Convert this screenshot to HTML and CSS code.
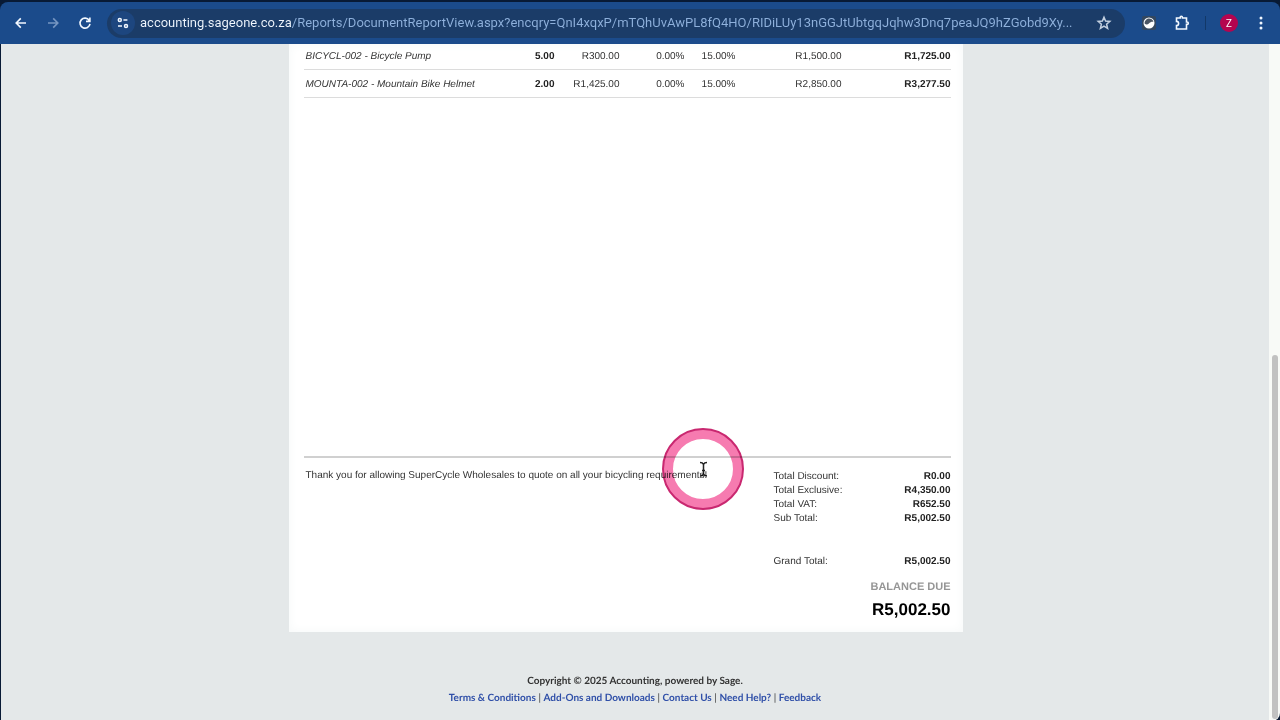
FILE: index.html
```html
<!DOCTYPE html>
<html lang="en">
<head>
<meta charset="utf-8">
<meta name="viewport" content="width=device-width, initial-scale=1">
<title>Document Report View</title>
<link rel="stylesheet" href="styles.css">
</head>
<body>
<header class="toolbar">
  <button class="icon-btn" type="button" aria-label="Back"><svg width="16" height="16" viewBox="0 0 16 16"><path d="M13 8H3.500M7.800 3.400 3.200 8l4.600 4.600"/></svg></button>
  <button class="icon-btn dim" type="button" aria-label="Forward"><svg width="16" height="16" viewBox="0 0 16 16"><path d="M3 8h9.500M8.200 3.400 12.800 8l-4.600 4.600"/></svg></button>
  <button class="icon-btn" type="button" aria-label="Reload"><svg width="16" height="16" viewBox="0 0 16 16"><path d="M12.200 5.300A5 5 0 1 0 13 8.800M12.900 2.500v3.900H9"/></svg></button>
  <div class="address">
    <button class="site-btn" type="button" aria-label="View site information"><svg width="14" height="14" viewBox="0 0 14 14"><circle cx="3.800" cy="4" r="1.500"/><path d="M7.400 4h4M2 10h4"/><circle cx="10" cy="10" r="1.500"/></svg></button>
    <input class="url" type="text" aria-label="Address" spellcheck="false" value="accounting.sageone.co.za/Reports/DocumentReportView.aspx?encqry=QnI4xqxP/mTQhUvAwPL8fQ4HO/RIDiLUy13nGGJtUbtgqJqhw3Dnq7peaJQ9hZGobd9Xy...">
    <button class="icon-btn star" type="button" aria-label="Bookmark this page"><svg width="16" height="16" viewBox="0 0 16 16"><path d="m8 2.200 1.600 3.900 4.200.3-3.200 2.800 1 4.100L8 11.100l-3.600 2.200 1-4.100-3.200-2.800 4.200-.3z"/></svg></button>
  </div>
  <div class="extensions">
    <button class="icon-btn" type="button" aria-label="Extension"><svg width="16" height="16" viewBox="0 0 16 16"><rect class="ext-bg" x="1" y="1" width="14" height="14" rx="2"/><circle class="ext-disc" cx="8" cy="8" r="5.500"/><path class="ext-wave" d="M3.600 8.600c1.300 1.300 3.200 1 4.300-.1 1.200-1.200 2.700-1.900 4.600-1.600-.7-2.400-2.500-3.400-4.500-3.400S3.400 5.600 3.600 8.600z"/></svg></button>
    <button class="icon-btn" type="button" aria-label="Extensions"><svg width="18" height="18" viewBox="0 0 18 18"><path d="M3.500 4h3.700V3.300a1 1 0 0 1 2.200 0V4H13.500v4h.6a1.200 1.200 0 0 1 0 2.400h-.6v4.600H3.500v-3.400a2.100 2.100 0 0 0 0-4.200z"/></svg></button>
  </div>
  <span class="divider"></span>
  <button class="avatar" type="button" aria-label="Profile">Z</button>
  <button class="icon-btn menu" type="button" aria-label="Menu"><svg width="16" height="16" viewBox="0 0 16 16"><circle cx="8" cy="3" r="1.500"/><circle cx="8" cy="8" r="1.500"/><circle cx="8" cy="13" r="1.500"/></svg></button>
</header>
<div class="viewport">
  <main class="page">
    <div class="stage">
      <article class="sheet">
        <section class="items">
          <table class="lines">
            <colgroup><col><col class="c-qty"><col class="c-price"><col class="c-disc"><col class="c-vat"><col class="c-excl"><col class="c-total"></colgroup>
            <tbody>
              <tr><td class="desc">BICYCL-002 - Bicycle Pump</td><td class="strong">5.00</td><td>R300.00</td><td>0.00%</td><td>15.00%</td><td>R1,500.00</td><td class="strong">R1,725.00</td></tr>
              <tr><td class="desc">MOUNTA-002 - Mountain Bike Helmet</td><td class="strong">2.00</td><td>R1,425.00</td><td>0.00%</td><td>15.00%</td><td>R2,850.00</td><td class="strong">R3,277.50</td></tr>
            </tbody>
          </table>
        </section>
        <section class="summary">
          <p class="note">Thank you for allowing SuperCycle Wholesales to quote on all your bicycling requirements!</p>
          <div class="totals">
            <dl>
              <div><dt>Total Discount:</dt><dd>R0.00</dd></div>
              <div><dt>Total Exclusive:</dt><dd>R4,350.00</dd></div>
              <div><dt>Total VAT:</dt><dd>R652.50</dd></div>
              <div><dt>Sub Total:</dt><dd>R5,002.50</dd></div>
              <div class="grand"><dt>Grand Total:</dt><dd>R5,002.50</dd></div>
            </dl>
            <p class="due-label">BALANCE DUE</p>
            <p class="due">R5,002.50</p>
          </div>
        </section>
        <svg class="pointer" width="82" height="82" viewBox="0 0 82 82" aria-hidden="true"><circle class="halo" cx="41" cy="41" r="35"/><circle class="rim" cx="41" cy="41" r="40"/><path class="beam" d="M38 34.500c2 0 3 .8 3.500 1.800.5-1 1.500-1.800 3.500-1.800M41.500 36v10.500M38 48c2 0 3-.8 3.500-1.800.5 1 1.500 1.800 3.500 1.800M40 42.500h3"/></svg>
      </article>
    </div>
    <footer class="footer">
      <p>Copyright © 2025 Accounting, powered by Sage.</p>
      <nav><a href="#">Terms &amp; Conditions</a> | <a href="#">Add-Ons and Downloads</a> | <a href="#">Contact Us</a> | <a href="#">Need Help?</a> | <a href="#">Feedback</a></nav>
    </footer>
  </main>
  <div class="scroll-track"><div class="scroll-thumb"></div></div>
</div>
</body>
</html>
```
FILE: styles.css
```css
* { box-sizing: border-box; }
body {
  margin: 0;
  min-height: 100vh;
  display: flex;
  flex-direction: column;
  background: #081a35;
  font-family: "Liberation Sans", Arial, sans-serif;
  font-size: 10px;
  line-height: 14px;
  color: #333;
  text-rendering: geometricPrecision;
}
p, dl, dd { margin: 0; }
button { border: 0; padding: 0; background: none; color: inherit; cursor: pointer; }

.toolbar {
  height: 42px;
  margin-top: 2px;
  padding: 0 7px 0 8px;
  display: flex;
  align-items: center;
  gap: 7px;
  background: #1b4b8b;
  border-radius: 8px 8px 0 0;
  color: #f2f8ff;
}
.icon-btn, .site-btn, .avatar { display: flex; flex: none; align-items: center; justify-content: center; }
.icon-btn { width: 25px; height: 24px; }
.icon-btn svg, .site-btn svg { fill: none; stroke: currentColor; stroke-width: 1.6; }
.dim { color: #7696c2; }
.address {
  flex: 1;
  min-width: 0;
  height: 29px;
  padding: 0 9px 0 4px;
  display: flex;
  align-items: center;
  gap: 5px;
  background: #1b3c68;
  border-radius: 15px;
  margin-left: 3px;
}
.site-btn { width: 24px; height: 24px; border-radius: 50%; background: #1d467f; }
.address .site-btn svg { stroke-width: 1.5; }
.url {
  flex: 1;
  min-width: 0;
  border: 0;
  padding: 0;
  outline: 0;
  font-family: Roboto, sans-serif;
  font-size: 13px;
  line-height: 20px;
  color: #8fb1dc;
  text-overflow: ellipsis;
  background: linear-gradient(90deg, #f2f8ff 152px, #8fb1dc 152px);
  -webkit-background-clip: text;
  background-clip: text;
  -webkit-text-fill-color: transparent;
}
.star { color: #c3d0e0; }
.address .star svg { stroke-width: 1.5; }
.extensions { display: flex; gap: 8px; margin-left: 4px; }
.ext-bg { fill: #33475f; stroke: none; }
.ext-disc { fill: #fff; stroke: none; }
.ext-wave { fill: #4a5563; stroke: none; }
.divider { width: 1px; height: 14px; margin: 0 7px 0 4px; background: #123868; }
.avatar { width: 18px; height: 18px; border-radius: 50%; background: #b4054f; font-family: Inter, sans-serif; font-size: 10px; color: #fff; }
.menu { margin-left: 3px; }
.menu svg { fill: currentColor; stroke: none; }

.viewport { flex: 1; display: flex; padding-left: 1px; }
.page { flex: 1; min-width: 0; background: #e4e8e9; padding-bottom: 14px; }
.stage { padding-right: 19px; }
.sheet {
  position: relative;
  width: 674px;
  max-width: 100%;
  margin: 0 auto 41px;
  padding: 0 12px 12px 15px;
  background: #fff;
  box-shadow: inset 0 0 9px 2px #f8fafa;
}
.items { min-height: 412px; }
.lines { width: 100%; table-layout: fixed; border-collapse: collapse; }
.lines td { height: 28px; padding: 4px 0 0; border-bottom: 1px solid #dcdcdc; text-align: right; white-space: nowrap; vertical-align: middle; }
.lines tr:first-child td { height: 25px; padding-top: 2px; }
.lines .desc { padding-left: 2px; text-align: left; font-style: italic; }
.lines .strong { font-weight: 700; color: #222; }
.c-qty { width: 55px; }
.c-price { width: 65px; }
.c-disc { width: 65px; }
.c-vat { width: 51px; }
.c-excl { width: 106px; }
.c-total { width: 109px; }
.summary { display: flex; justify-content: space-between; border-top: 2px solid #d0d0d0; padding: 11px 0 0 2px; }
.totals { width: 177px; padding-top: 1px; }
.totals dl div { display: flex; justify-content: space-between; }
.totals dd { font-weight: 700; color: #222; }
.totals .grand { margin-top: 29px; }
.due-label { margin-top: 11px; text-align: right; font-size: 11px; font-weight: 700; color: #969696; }
.due { margin-top: 6px; text-align: right; font-size: 17px; line-height: 20px; font-weight: 700; color: #000; }
.pointer { position: absolute; left: 373px; top: 384px; pointer-events: none; mix-blend-mode: multiply; }
.halo { fill: none; stroke: #f67bb0; stroke-width: 10; }
.rim { fill: none; stroke: #c92870; stroke-width: 2; }
.beam { fill: none; stroke: #222; stroke-width: 1.5; }
.footer { text-align: center; font-family: Lato, sans-serif; font-size: 10px; line-height: 17px; font-weight: 700; }
.footer a { color: #2f4fa8; text-decoration: none; }
.footer nav { font-weight: 400; }
.footer nav a { font-weight: 700; }
.scroll-track { width: 11px; padding: 311px 2px 2px 3px; display: flex; background: #f8faf7; border-radius: 0 0 8px 0; }
.scroll-thumb { flex: 1; border-radius: 3px; background: #c1c1c1; }
```
